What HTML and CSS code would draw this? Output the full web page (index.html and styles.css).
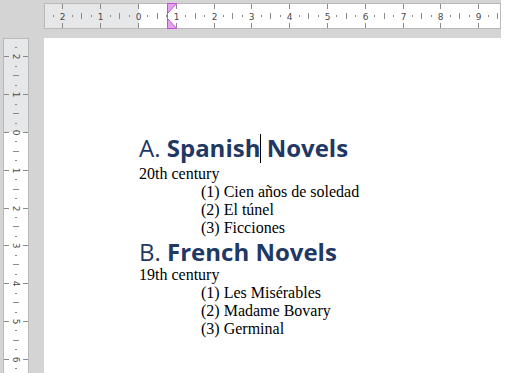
FILE: index.html
```html
<!DOCTYPE html>
<html lang="en">
<head>
  <meta charset="UTF-8">
  <meta name="viewport" content="width=device-width, initial-scale=1.0">
  <title>Novels</title>
  <link rel="stylesheet" href="styles.css">
</head>
<body>
  <div class="top">
    <div class="corner"></div>
    <div class="hruler-slot">
      <svg class="ruler" width="457" height="26" viewBox="0 0 457 26">
        <rect class="paper" x="0" y="0" width="457" height="26"/>
        <rect class="shade" x="0" y="0" width="95" height="26"/>
        <rect class="frame" x="0.5" y="0.5" width="456" height="25"/>
        <path class="tick" d="M9.5 12v2M28.5 12v2M47.5 12v2M66.5 12v2M85.5 12v2M103.5 12v2M122.5 12v2M141.5 12v2M160.5 12v2M179.5 12v2M198.5 12v2M217.5 12v2M236.5 12v2M255.5 12v2M274.5 12v2M292.5 12v2M311.5 12v2M330.5 12v2M349.5 12v2M368.5 12v2M387.5 12v2M406.5 12v2M425.5 12v2M444.5 12v2"/>
        <path class="tick" d="M37.5 10v6M75.5 10v6M113.5 10v6M151.5 10v6M188.5 10v6M226.5 10v6M264.5 10v6M302.5 10v6M340.5 10v6M377.5 10v6M415.5 10v6M453.5 10v6"/>
        <path class="tick" d="M18.5 1v5M18.5 20v5M56.5 1v5M56.5 20v5M94.5 1v5M94.5 20v5M132.5 1v5M132.5 20v5M170.5 1v5M170.5 20v5M207.5 1v5M207.5 20v5M245.5 1v5M245.5 20v5M283.5 1v5M283.5 20v5M321.5 1v5M321.5 20v5M359.5 1v5M359.5 20v5M396.5 1v5M396.5 20v5M434.5 1v5M434.5 20v5"/>
        <g class="nums">
          <text x="18.5" y="16.5">2</text>
          <text x="56.5" y="16.5">1</text>
          <text x="94.5" y="16.5">0</text>
          <text x="132.5" y="16.5">1</text>
          <text x="170.5" y="16.5">2</text>
          <text x="207.5" y="16.5">3</text>
          <text x="245.5" y="16.5">4</text>
          <text x="283.5" y="16.5">5</text>
          <text x="321.5" y="16.5">6</text>
          <text x="359.5" y="16.5">7</text>
          <text x="396.5" y="16.5">8</text>
          <text x="434.5" y="16.5">9</text>
        </g>
        <!-- indent marker -->
        <polygon class="marker" points="123.5,0.5 132.5,0.5 123.5,10.5"/>
        <polygon class="marker" points="123.5,15.5 132.5,25.5 123.5,25.5"/>
        <path class="marker-edge" d="M123.5 0v26"/>
      </svg>
    </div>
    <div class="top-end"></div>
  </div>

  <div class="main">
    <div class="side">
      <svg class="ruler" width="26" height="335" viewBox="0 0 26 335">
        <rect class="paper" x="0" y="0" width="26" height="335"/>
        <rect class="shade" x="0" y="0" width="26" height="94"/>
        <rect class="frame" x="0.5" y="0.5" width="25" height="345"/>
        <path class="tick" d="M12 9.5h2M12 28.5h2M12 47.5h2M12 66.5h2M12 85.5h2M12 103.5h2M12 122.5h2M12 141.5h2M12 160.5h2M12 179.5h2M12 198.5h2M12 217.5h2M12 236.5h2M12 255.5h2M12 274.5h2M12 292.5h2M12 311.5h2M12 330.5h2"/>
        <path class="tick" d="M10 37.5h6M10 75.5h6M10 113.5h6M10 151.5h6M10 188.5h6M10 226.5h6M10 264.5h6M10 302.5h6"/>
        <path class="tick" d="M1 18.5h5M20 18.5h5M1 56.5h5M20 56.5h5M1 94.5h5M20 94.5h5M1 132.5h5M20 132.5h5M1 170.5h5M20 170.5h5M1 207.5h5M20 207.5h5M1 245.5h5M20 245.5h5M1 283.5h5M20 283.5h5M1 321.5h5M20 321.5h5"/>
        <g class="nums">
          <text transform="translate(13 18.5) rotate(90)" y="3.5">2</text>
          <text transform="translate(13 56.5) rotate(90)" y="3.5">1</text>
          <text transform="translate(13 94.5) rotate(90)" y="3.5">0</text>
          <text transform="translate(13 132.5) rotate(90)" y="3.5">1</text>
          <text transform="translate(13 170.5) rotate(90)" y="3.5">2</text>
          <text transform="translate(13 207.5) rotate(90)" y="3.5">3</text>
          <text transform="translate(13 245.5) rotate(90)" y="3.5">4</text>
          <text transform="translate(13 283.5) rotate(90)" y="3.5">5</text>
          <text transform="translate(13 321.5) rotate(90)" y="3.5">6</text>
        </g>
      </svg>
    </div>

    <div class="page">
      <h1 class="heading current">A. <b>Spanish<span class="caret"></span> Novels</b></h1>
      <p class="century">20th century</p>
      <ol class="works">
        <li>(1) Cien años de soledad</li>
        <li>(2) El túnel</li>
        <li>(3) Ficciones</li>
      </ol>
      <h1 class="heading">B. <b>French Novels</b></h1>
      <p class="century">19th century</p>
      <ol class="works">
        <li>(1) Les Misérables</li>
        <li>(2) Madame Bovary</li>
        <li>(3) Germinal</li>
      </ol>
    </div>
  </div>
</body>
</html>
```

FILE: styles.css
```css
body {
  margin: 0;
  height: 373px;
  overflow: hidden;
  background: #fff;
  font-family: "Liberation Serif", "Times New Roman", serif;
  color: #000;
}
.top {
  display: flex;
  height: 38px;
}
.corner {
  width: 44px;
  background: #d4d4d4;
}
.hruler-slot {
  width: 457px;
  padding-top: 3px;
  background: #d4d4d4;
}
.top-end {
  flex: 1;
  background: #fff;
}
.main {
  display: flex;
  height: 335px;
}
.side {
  width: 41px;
  padding-left: 3px;
  background: #d4d4d4;
}
.ruler {
  display: block;
}
.ruler .paper { fill: #fff; }
.ruler .shade { fill: #e6e7e9; }
.ruler .frame {
  fill: none;
  stroke: #bababa;
}
.ruler .tick {
  fill: none;
  stroke: #8a8a8a;
}
.ruler .nums text {
  font-family: "DejaVu Sans", sans-serif;
  font-size: 9px;
  fill: #4a4a4a;
  text-anchor: middle;
}
.marker {
  fill: #e5a3f2;
  stroke: #c350e2;
}
.marker-edge {
  stroke: #c350e2;
}
.page {
  flex: 1;
  background: #fff;
  padding: 95px 0 0 95px;
}
.heading {
  margin: 0;
  font-family: "Open Sans", sans-serif;
  font-size: 24px;
  font-weight: 400;
  line-height: 29px;
  color: #1f3864;
}
.heading.current {
  padding-bottom: 2px;
}
.heading b {
  font-weight: 700;
}
.caret {
  display: inline-block;
  width: 1px;
  height: 29px;
  margin-right: -1px;
  background: #000;
  vertical-align: -6px;
}
.century {
  margin: 0;
  font-size: 16px;
}
.works {
  list-style: none;
  margin: 0;
  padding-left: 62px;
  font-size: 16px;
}
```
